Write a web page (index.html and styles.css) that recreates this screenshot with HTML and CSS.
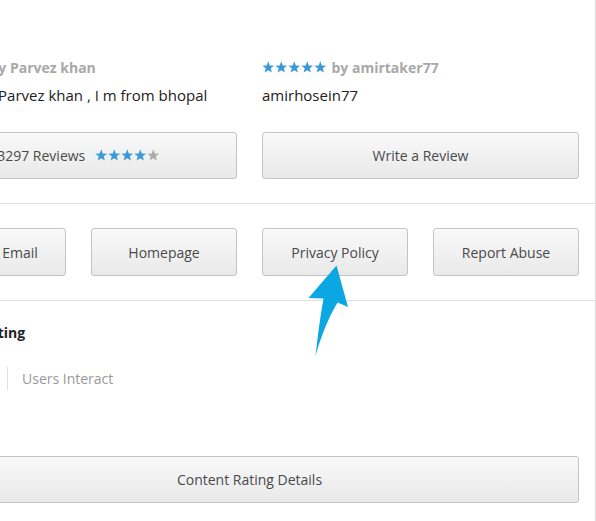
FILE: index.html
```html
<!DOCTYPE html>
<html>
<head>
<meta charset="utf-8">
<link rel="stylesheet" href="styles.css">
</head>
<body>
<svg class="defs" width="0" height="0" aria-hidden="true">
  <defs>
    <symbol id="star" viewBox="0 0 12 12">
      <polygon points="6,0.3 7.47,4.28 11.71,4.45 8.38,7.07 9.53,11.15 6,8.8 2.47,11.15 3.62,7.07 0.29,4.45 4.53,4.28"/>
    </symbol>
  </defs>
</svg>
<div class="card">
  <section class="reviews">
    <div class="col">
      <div class="rev-head">
        <span class="stars"><svg><use href="#star"/></svg><svg><use href="#star"/></svg><svg><use href="#star"/></svg><svg><use href="#star"/></svg><svg><use href="#star"/></svg></span>
        <span class="author">by Parvez khan</span>
      </div>
      <p class="rev-body">Hello I am  Parvez khan , I m from bhopal</p>
      <button class="btn wide">3297 Reviews <span class="stars small"><svg><use href="#star"/></svg><svg><use href="#star"/></svg><svg><use href="#star"/></svg><svg><use href="#star"/></svg><svg class="off"><use href="#star"/></svg></span></button>
    </div>
    <div class="col">
      <div class="rev-head">
        <span class="stars"><svg><use href="#star"/></svg><svg><use href="#star"/></svg><svg><use href="#star"/></svg><svg><use href="#star"/></svg><svg><use href="#star"/></svg></span>
        <span class="author">by amirtaker77</span>
      </div>
      <p class="rev-body">amirhosein77</p>
      <button class="btn wide">Write a Review</button>
    </div>
  </section>
  <section class="links">
    <button class="btn">Contact Email</button>
    <button class="btn">Homepage</button>
    <button class="btn">Privacy Policy</button>
    <button class="btn">Report Abuse</button>
  </section>
  <section class="rating">
    <h3 class="rating-title">Content Rating</h3>
    <div class="rating-row">
      <span class="rating-item first">Everyone</span>
      <span class="rating-item">Users Interact</span>
    </div>
    <button class="btn full">Content Rating Details</button>
  </section>
</div>
<svg class="arrow" width="60" height="110" viewBox="295 255 60 110" aria-hidden="true">
  <path d="M336.5,265.5 L308.5,298 L323.5,298.5 C320,318 317.5,338 315.5,356 C320,340 327,320 337.5,302.5 L348,307 Z" fill="#0aa7e2"/>
</svg>
</body>
</html>
```
FILE: styles.css
```css
html, body {
  margin: 0;
  padding: 0;
  background: #fff;
  overflow: hidden;
}
body {
  width: 596px;
  height: 521px;
  position: relative;
  font-family: "Open Sans", "Noto Sans", sans-serif;
  color: #333;
}
.defs { position: absolute; }
.card {
  margin-left: -96px;
  width: 691px;
  height: 521px;
  border-right: 1px solid #ddd;
  background: #fff;
}
.reviews {
  display: grid;
  grid-template-columns: 317px 317px;
  column-gap: 25px;
  padding: 57px 16px 24px 16px;
  border-bottom: 1px solid #ddd;
}
.rev-head {
  display: flex;
  align-items: center;
  gap: 5px;
  height: 20px;
}
.stars {
  display: inline-flex;
  gap: 0.5px;
  fill: #3a9ad9;
}
.stars svg {
  width: 12.5px;
  height: 12.5px;
}
.stars svg.off { fill: #aaa; }
.author {
  font-size: 14px;
  font-weight: 700;
  color: #a8a8a8;
  white-space: nowrap;
}
.rev-body {
  margin: 8px 0 0 0;
  font-size: 15px;
  line-height: 20px;
  color: #222;
  white-space: pre;
}
.btn {
  display: flex;
  align-items: center;
  justify-content: center;
  gap: 10px;
  box-sizing: border-box;
  height: 47px;
  width: 146px;
  padding: 0;
  border: 1px solid #c4c4c4;
  border-radius: 3px;
  background: linear-gradient(#f9f9f9, #e9e9e9);
  font-family: inherit;
  font-size: 14px;
  color: #4a4a4a;
}
.btn.wide {
  width: 317px;
  margin-top: 27px;
}
.links {
  display: flex;
  gap: 25px;
  padding: 24px 16px 24px 16px;
  border-bottom: 1px solid #ddd;
}
.links .btn { height: 48px; }
.rating {
  padding: 21px 16px 0 16px;
}
.rating-title {
  margin: 0;
  font-size: 14px;
  line-height: 22px;
  font-weight: 700;
  color: #222;
}
.rating-row {
  display: flex;
  margin-top: 23px;
  height: 23px;
}
.rating-item {
  display: flex;
  align-items: center;
  font-size: 14px;
  color: #999;
  padding-left: 14px;
  border-left: 1px solid #e0e0e0;
}
.rating-item.first {
  width: 87px;
  box-sizing: border-box;
  padding-left: 0;
  border-left: 0;
}
.btn.full {
  width: 659px;
  margin-top: 66px;
}
.arrow {
  position: absolute;
  left: 295px;
  top: 255px;
}
```
